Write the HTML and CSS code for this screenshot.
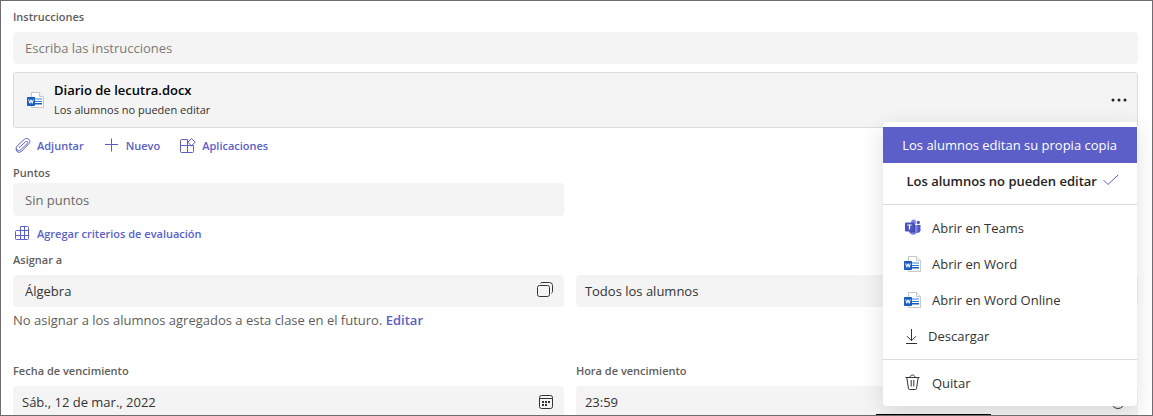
FILE: index.html
```html
<!DOCTYPE html>
<html lang="es">
<head>
<meta charset="utf-8">
<meta name="viewport" content="width=device-width, initial-scale=1">
<title>Tarea</title>
<link rel="stylesheet" href="styles.css">
</head>
<body>
<svg class="sprite" aria-hidden="true">
  <symbol id="word" viewBox="0 0 18 18">
    <path d="M4.500 1.500h8l4 4v11h-12z" fill="#fff" stroke="#c8c8c8"/>
    <path d="M12.500 1.500v4h4" fill="#f3f3f3" stroke="#c8c8c8"/>
    <path d="M8 7h7v2H8z" fill="#9cc3ee"/>
    <path d="M8 10h7v1H8z" fill="#2b7cd3"/>
    <path d="M8 12h7v1.500H8z" fill="#185abd"/>
    <rect x="0" y="6" width="8" height="9" rx=".7" fill="#1b5cbe"/>
    <path d="M1.700 8.500l1.100 3.800L4 8.700l1.200 3.600 1.100-3.800" fill="none" stroke="#fff" stroke-width="1"/>
  </symbol>
</svg>
<main class="frame">
  <form class="assignment">
    <label class="label" for="instructions">Instrucciones</label>
    <input class="input input-wide" id="instructions" type="text" placeholder="Escriba las instrucciones">

    <section class="attachment">
      <svg class="icon-word"><use href="#word"/></svg>
      <div class="attachment-text">
        <div class="attachment-name">Diario de lecutra.docx</div>
        <div class="attachment-note">Los alumnos no pueden editar</div>
      </div>
      <button class="more" type="button" aria-label="Más opciones">
        <svg width="16" height="4" viewBox="0 0 16 4"><circle cx="2" cy="2" r="1.500"/><circle cx="8" cy="2" r="1.500"/><circle cx="14" cy="2" r="1.500"/></svg>
      </button>

      <div class="menu" role="menu">
        <button class="menu-item menu-choice is-active" type="button" role="menuitem">Los alumnos editan su propia copia</button>
        <button class="menu-item menu-choice is-checked" type="button" role="menuitem">Los alumnos no pueden editar
          <svg class="check" viewBox="0 0 16 16"><path d="M.7 7.200L5 11.500 15.300 1.800"/></svg>
        </button>
        <hr class="menu-divider">
        <button class="menu-item" type="button" role="menuitem">
          <svg class="menu-icon" viewBox="0 0 18 18">
            <circle cx="14.300" cy="3.500" r="1.700" fill="#5059c9"/>
            <circle cx="9.500" cy="3" r="2.500" fill="#7b83eb"/>
            <path d="M12 6h4.500v5.200a2.700 2.700 0 0 1-4 2.300z" fill="#5059c9"/>
            <path d="M5 6h8.500v5.500a4.200 4.200 0 0 1-8.500 0z" fill="#7b83eb"/>
            <path d="M5 4.500h6v9H5.500z" fill="#4148a8"/>
            <rect x="1" y="3.500" width="9" height="9" rx=".8" fill="#4b53bc"/>
            <path d="M3.300 6h4.400M5.500 6v4.500" stroke="#fff" stroke-width="1.200"/>
          </svg>Abrir en Teams</button>
        <button class="menu-item" type="button" role="menuitem"><svg class="menu-icon"><use href="#word"/></svg>Abrir en Word</button>
        <button class="menu-item" type="button" role="menuitem"><svg class="menu-icon"><use href="#word"/></svg>Abrir en Word Online</button>
        <button class="menu-item menu-download" type="button" role="menuitem">
          <svg class="menu-icon menu-line" viewBox="0 0 18 18"><path d="M7.500 2v11.500M3 9.200l4.500 4.500L12 9.200M2 16.500h11"/></svg>Descargar</button>
        <hr class="menu-divider">
        <button class="menu-item" type="button" role="menuitem">
          <svg class="menu-icon menu-line" viewBox="0 0 18 18"><path d="M1.500 3.500h14M6 3.500C6 .2 11 .2 11 3.500M2.800 3.500l1.700 11.200q.2.800 1 .8h6q.8 0 1-.8l1.700-11.200M7.200 6v6.500M9.800 6v6.500"/></svg>Quitar</button>
      </div>
    </section>

    <div class="actions">
      <button class="action" type="button">
        <svg class="action-icon" viewBox="0 0 16 16"><path d="M4 9.800L10.600 3.700c1.300-1.200 3 .4 1.800 1.700L5.800 11.700c-2.600 2.500-6.300-.9-3.800-3.500L9.300 1.400c3.200-2.900 7.400 1.200 4.600 4.300l-7.400 7.600q-2.500 2.200-4.500.2-1.200-1.300-.7-3"/></svg>Adjuntar</button>
      <button class="action" type="button">
        <svg class="action-icon" viewBox="0 0 16 16"><path d="M7.500 .5v13M1 6.500h13"/></svg>Nuevo</button>
      <button class="action" type="button">
        <svg class="action-icon" viewBox="0 0 16 16"><path d="M7.500 1.500h-6a1 1 0 0 0-1 1v11a1 1 0 0 0 1 1h11a1 1 0 0 0 1-1v-6H.5M7.500 1.500v13M11.500 .6l3.700 3.600-3.700 3.600-3.700-3.600z"/></svg>Aplicaciones</button>
    </div>

    <div class="columns">
      <div>
        <label class="label label-tight" for="points">Puntos</label>
        <input class="input points" id="points" type="text" placeholder="Sin puntos">
        <button class="action rubric" type="button">
          <svg class="action-icon" viewBox="0 0 16 16"><path d="M5.500 .5h7a1 1 0 0 1 1 1v11a1 1 0 0 1-1 1h-11a1 1 0 0 1-1-1v-7a1 1 0 0 1 1-1h12M5.500 .5v13M9.500 .5v13M.5 9.500h13"/></svg>Agregar criterios de evaluación</button>
      </div>
    </div>

    <label class="label assign-label" for="class">Asignar a</label>
    <div class="columns">
      <div class="field">
        <input class="input" id="class" type="text" value="Álgebra">
        <svg class="field-icon" viewBox="0 0 18 18"><rect x=".5" y="4.500" width="12" height="11" rx="2"/><path d="M3.500 2.500a2 2 0 0 1 1.500-1h7.500a3 3 0 0 1 3 3v6a2 2 0 0 1-1 1.700"/></svg>
      </div>
      <div class="field">
        <input class="input input-compact" type="text" value="Todos los alumnos" aria-label="Alumnos">
      </div>
    </div>
    <p class="note">No asignar a los alumnos agregados a esta clase en el futuro. <a class="link" href="#">Editar</a></p>

    <div class="columns due">
      <div>
        <label class="label" for="date">Fecha de vencimiento</label>
        <div class="field">
          <input class="input input-compact" id="date" type="text" value="Sáb., 12 de mar., 2022">
          <svg class="field-icon" viewBox="0 0 18 18"><rect x="2.500" y="3.500" width="13" height="13" rx="2"/><path d="M2.500 6.500h13"/><path class="dots" d="M5 10h8M5 13h5"/></svg>
        </div>
      </div>
      <div>
        <label class="label" for="time">Hora de vencimiento</label>
        <div class="field">
          <input class="input input-compact" id="time" type="text" value="23:59">
          <svg class="field-icon clock" viewBox="0 0 18 18"><circle cx="7" cy="10" r="6.500"/><path d="M7 6v4h3"/></svg>
        </div>
      </div>
    </div>
  </form>
  <div class="edge-bar"></div>
</main>
</body>
</html>
```
FILE: styles.css
```css
* { box-sizing: border-box; }

body {
  margin: 0;
  background: #fff;
  color: #333;
  font: 13px/20px "Open Sans", "Noto Sans", sans-serif;
}

button, input { font: inherit; color: inherit; }
button { border: 0; padding: 0; background: none; cursor: pointer; }
svg { flex: none; display: block; }
.sprite { position: absolute; width: 0; height: 0; }

.frame {
  position: relative;
  height: 100vh;
  overflow: hidden;
  border: 1px solid #6e6c6e;
}
.edge-bar {
  position: absolute;
  right: 14%;
  bottom: 0;
  width: 10%;
  height: 1px;
  background: #000;
}

.assignment { padding: 7px 14px 0 12px; }

.label {
  display: block;
  margin-bottom: 6px;
  color: #605e5c;
  font-size: 11px;
  line-height: 18px;
  font-weight: 600;
}
.label-tight { margin-bottom: 1px; }

.input {
  display: block;
  width: 100%;
  height: 32px;
  padding: 0 40px 0 12px;
  border: 0;
  border-radius: 4px;
  background: #f4f4f4;
}
.input::placeholder { color: #6b6967; opacity: 1; }
.input-wide::placeholder { color: #7c7a78; }
.input-compact { padding-left: 9px; }
.points { height: 33px; }

.field { position: relative; }
.field-icon {
  position: absolute;
  top: 6px;
  right: 9px;
  width: 18px;
  height: 18px;
  fill: none;
  stroke: #333;
}
.dots { stroke-width: 2; stroke-dasharray: 2 1; }

.attachment {
  position: relative;
  display: flex;
  align-items: center;
  margin-top: 8px;
  height: 56px;
  padding: 0 10px 0 13px;
  border: 1px solid #dcdcdc;
  border-radius: 3px;
  background: #f4f4f4;
}
.icon-word { width: 18px; height: 18px; }
.attachment-text { flex: 1; margin-left: 9px; }
.attachment-name { color: #000; font-weight: 600; }
.attachment-note { font-size: 11px; }
.more { fill: #222; }

.menu {
  position: absolute;
  z-index: 1;
  top: 49px;
  right: 0;
  width: 254px;
  padding: 5px 0;
  border-radius: 4px;
  background: #fff;
  box-shadow: 0 6px 24px rgba(0, 0, 0, .12);
}
.menu-item {
  display: flex;
  align-items: center;
  gap: 10px;
  width: 100%;
  height: 36px;
  padding: 0 20px 0 21px;
  white-space: nowrap;
}
.menu-choice { justify-content: flex-end; gap: 6px; }
.is-active { background: #5b5fc7; color: #fff; }
.is-checked { color: #252423; font-weight: 600; padding-right: 18px; }
.check { width: 16px; height: 16px; fill: none; stroke: #5b5fc7; }
.menu-icon { width: 18px; height: 18px; }
.menu-line { fill: none; stroke: #333; }
.menu-download { gap: 6px; }
.menu-divider { height: 1px; margin: 5px 0; border: 0; background: #dcdcdc; }

.actions { display: flex; gap: 18px; margin: 8px 0; }
.action {
  display: flex;
  align-items: center;
  gap: 6px;
  height: 20px;
  padding-left: 2px;
  color: #5b5fc7;
  font-size: 11px;
  font-weight: 600;
}
.action-icon { width: 16px; height: 16px; fill: none; stroke: #5b5fc7; }
.rubric { margin-top: 8px; }
.assign-label { margin-top: 7px; }

.columns {
  display: grid;
  grid-template-columns: 49fr 50fr;
  column-gap: 12px;
}
.note { margin: 3px 0 0; color: #605e5c; }
.link { color: #5b5fc7; font-weight: 600; text-decoration: none; }
.due { margin-top: 32px; }
```
